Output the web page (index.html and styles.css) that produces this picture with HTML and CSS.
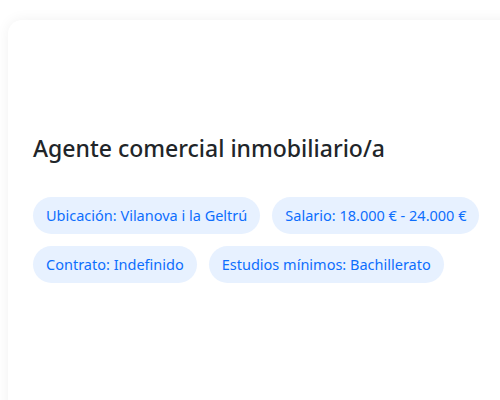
FILE: index.html
```html
<!DOCTYPE html>
<html lang="es">
<head>
  <meta charset="UTF-8" />
  <meta name="viewport" content="width=device-width, initial-scale=1.0" />
  <title>Oferta</title>
  <link rel="stylesheet" href="styles.css">
</head>
<body>
  <div class="card">
    <div class="card-top"></div>
    <h1 class="job-title">Agente comercial inmobiliario/a</h1>
    <div class="tags">
      <span class="tag">Ubicación: Vilanova i la Geltrú</span>
      <span class="tag">Salario: 18.000 € - 24.000 €</span>
      <span class="tag">Contrato: Indefinido</span>
      <span class="tag">Estudios mínimos: Bachillerato</span>
    </div>
  </div>
</body>
</html>
```

FILE: styles.css
```css
html {
  overflow: hidden;
}
body {
  font-family: 'Noto Sans', 'Open Sans', sans-serif;
  background: #fff;
  color: #212529;
  margin: 0;
  padding: 20px 0 0 8px;
}
.card {
  background: #fff;
  border-radius: 14px;
  box-shadow: 0 0 14px rgba(0, 0, 0, 0.06);
  padding: 0 25px 200px;
  width: 600px;
}
.card-top {
  height: 115px;
}
.job-title {
  font-size: 23px;
  font-weight: 500;
  margin: 0 0 34px;
  line-height: 1.2;
}
.tags {
  display: flex;
  flex-wrap: wrap;
  gap: 12px;
  width: 460px;
}
.tag {
  background: #e7f1ff;
  color: #0d6efd;
  font-size: 14.5px;
  padding: 9px 13px;
  border-radius: 19px;
  line-height: 19px;
}
```
